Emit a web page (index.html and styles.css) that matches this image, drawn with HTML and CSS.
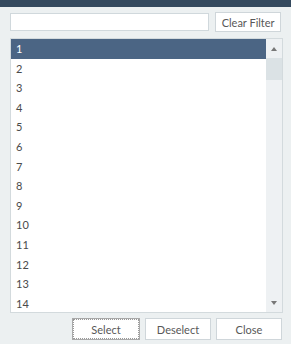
FILE: index.html
```html
<!DOCTYPE html>
<html lang="en">
<head>
  <meta charset="UTF-8" />
  <title>Filter List</title>
  <link rel="stylesheet" href="styles.css">
</head>
<body>

  <div class="topbar"></div>

  <div class="filter-row">
    <input type="text" class="filter-input" />
    <button class="btn clear-btn">Clear Filter</button>
  </div>

  <div class="list-box">
    <ul class="items">
      <li class="selected">1</li>
      <li>2</li>
      <li>3</li>
      <li>4</li>
      <li>5</li>
      <li>6</li>
      <li>7</li>
      <li>8</li>
      <li>9</li>
      <li>10</li>
      <li>11</li>
      <li>12</li>
      <li>13</li>
      <li>14</li>
    </ul>
    <div class="scrollbar">
      <div class="arrow up"><span class="tri-up"></span></div>
      <div class="thumb"></div>
      <div class="track"></div>
      <div class="arrow down"><span class="tri-down"></span></div>
    </div>
  </div>

  <div class="footer">
    <button class="btn focused">Select</button>
    <button class="btn">Deselect</button>
    <button class="btn">Close</button>
  </div>

</body>
</html>
```

FILE: styles.css
```css
html, body {
  margin: 0;
  padding: 0;
  background: #ecf0f1;
  font-family: Lato, "Noto Sans", sans-serif;
  font-size: 11px;
  color: #4a4a4a;
  overflow: hidden;
}

.topbar {
  height: 7px;
  background: #34495e;
}

.filter-row {
  display: flex;
  align-items: flex-start;
  gap: 6px;
  margin: 5px 10px 0 10px;
  width: 271px;
}

.filter-input {
  box-sizing: border-box;
  width: 200px;
  height: 18px;
  margin: 1px 0 0 0;
  padding: 0 3px;
  border: 1px solid #d0d8dc;
  background: #fff;
  outline: none;
}

.btn {
  box-sizing: border-box;
  height: 20px;
  padding: 0;
  border: 1px solid #cfd6da;
  background: #fff;
  font-family: Lato, "Noto Sans", sans-serif;
  font-size: 11px;
  color: #585858;
}

.clear-btn {
  width: 66px;
}

.list-box {
  box-sizing: border-box;
  display: flex;
  width: 273px;
  height: 275px;
  margin: 6px 0 0 10px;
  border: 1px solid #d3dadd;
  background: #fff;
}

.items {
  flex: 1;
  list-style: none;
  margin: 0;
  padding: 0;
  overflow: hidden;
}

.items li {
  height: 19.6px;
  line-height: 19.6px;
  padding-left: 5px;
  font-size: 11px;
}

.items li.selected {
  background: #4b6584;
  color: #fff;
}

.scrollbar {
  display: flex;
  flex-direction: column;
  width: 16px;
  background: #eef1f3;
}

.arrow {
  height: 19px;
  display: flex;
  align-items: center;
  justify-content: center;
}

.tri-up {
  width: 0;
  height: 0;
  border-left: 3.5px solid transparent;
  border-right: 3.5px solid transparent;
  border-bottom: 4px solid #777;
}

.tri-down {
  width: 0;
  height: 0;
  border-left: 3.5px solid transparent;
  border-right: 3.5px solid transparent;
  border-top: 4px solid #777;
}

.thumb {
  height: 22px;
  background: #dbe2e5;
}

.track {
  flex: 1;
}

.footer {
  display: flex;
  gap: 5px;
  justify-content: flex-end;
  width: 282px;
  margin-top: 5px;
}

.footer .btn {
  height: 22px;
  width: 66px;
}

.footer .btn.focused {
  width: 68px;
  border: 1px solid #a9a9a9;
  outline: 1px dotted #999;
  outline-offset: -2px;
}
```
